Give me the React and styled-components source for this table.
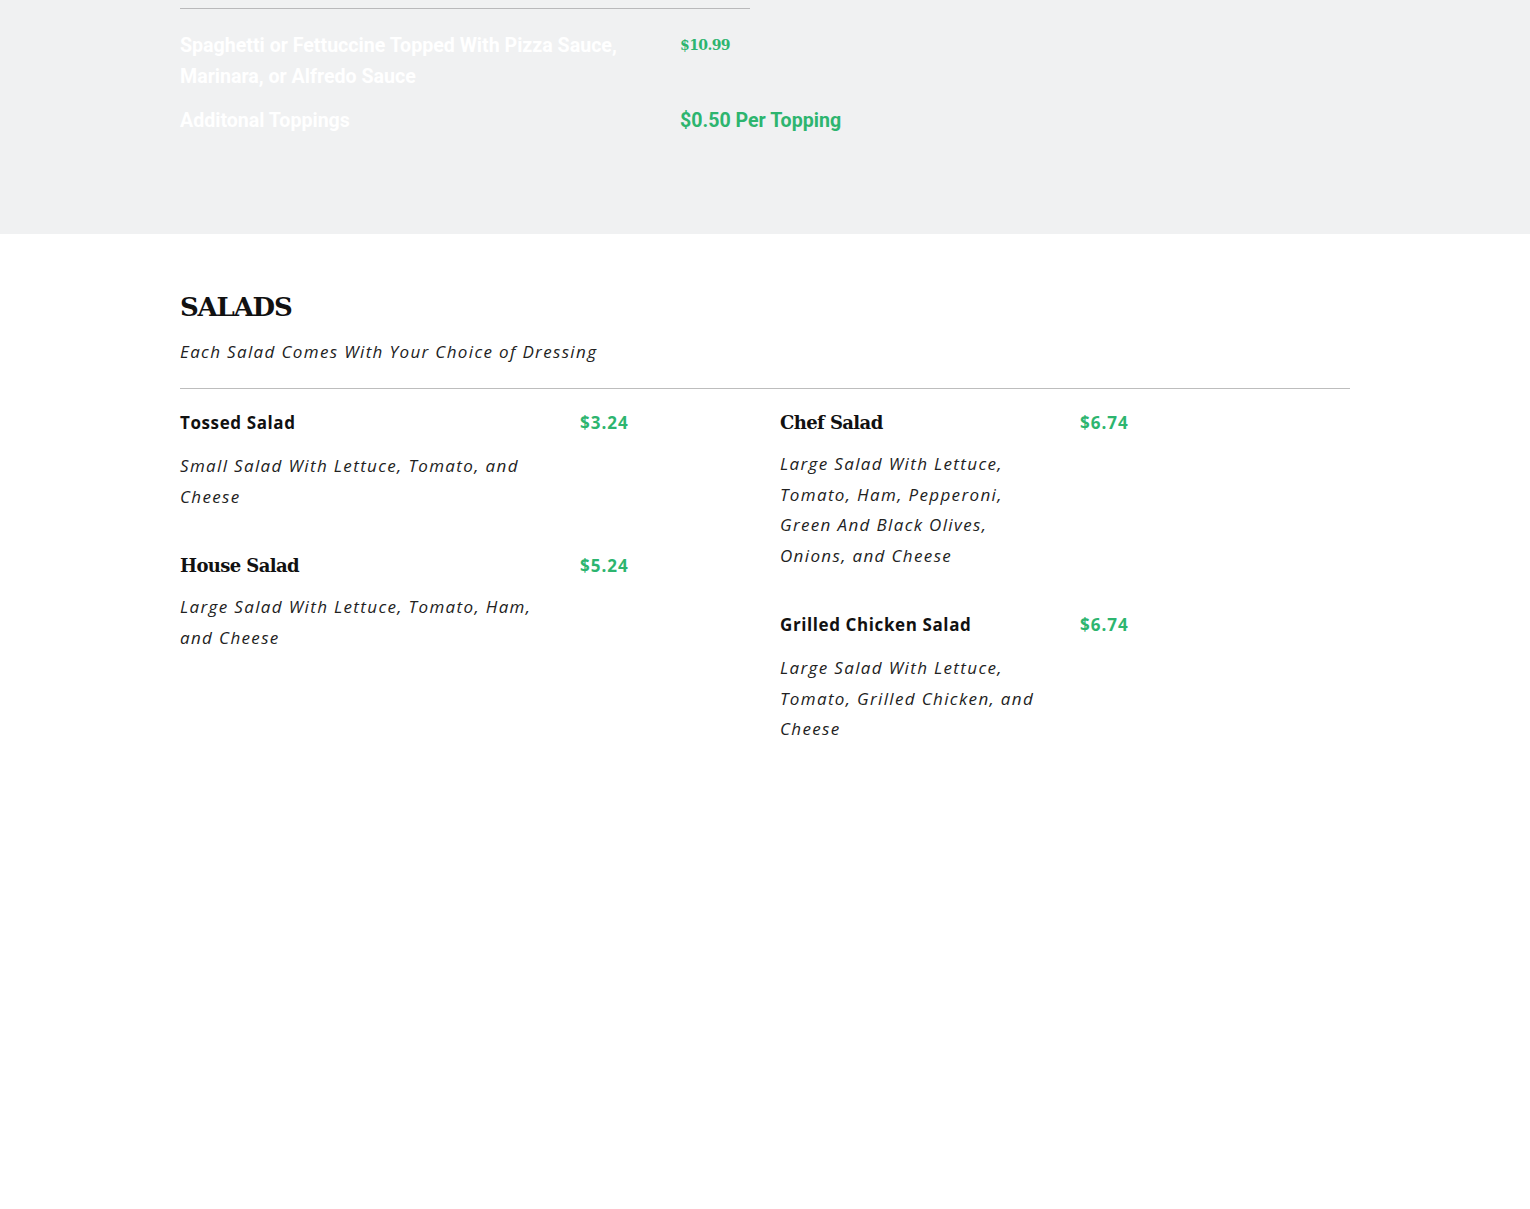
import React from 'react';
import styled, { createGlobalStyle } from 'styled-components';

const GlobalStyle = createGlobalStyle`
	html, body {
		margin: 0;
		padding: 0;
		background: #fff;
	}
	body {
		font-family: 'Open Sans', 'Noto Sans', sans-serif;
		color: #111;
	}
`;

const green = '#2db56f';
const slab = `'DejaVu Serif', serif`;
const sans = `'Open Sans', 'Noto Sans', sans-serif`;
const narrow = `'Liberation Sans Narrow', 'Roboto', sans-serif`;

const Container = styled.div`
	width: 1170px;
	margin: 0 auto;
`;

const TopBand = styled.section`
	background: #f0f1f2;
	height: 234px;
	box-sizing: border-box;
	padding-top: 8px;
`;

const ShortRule = styled.hr`
	width: 570px;
	margin: 0;
	border: none;
	border-top: 1px solid #b9b9bb;
`;

const PriceRows = styled.div`
	display: grid;
	grid-template-columns: 500px auto;
	row-gap: 13px;
	padding-top: 21px;
`;

const BandName = styled.div`
	width: 470px;
	color: #fff;
	font-family: ${narrow};
	font-weight: 700;
	font-size: 19.6px;
	line-height: 31px;
`;

const BandPrice = styled.div`
	color: ${green};
	font-family: ${props => props.slab ? slab : narrow};
	font-weight: 700;
	font-size: ${props => props.slab ? '14px' : '19.6px'};
	letter-spacing: ${props => props.slab ? '-0.6px' : '0'};
	line-height: 31px;
`;

const SaladSection = styled.section`
	padding-top: 56px;
	padding-bottom: 120px;
`;

const Title = styled.h2`
	margin: 0;
	font-family: ${slab};
	font-weight: 700;
	font-size: 26px;
	line-height: 34px;
	letter-spacing: -1.2px;
	color: #111;
`;

const Subtitle = styled.p`
	margin: 16px 0 0;
	font-family: ${sans};
	font-style: italic;
	font-size: 17px;
	line-height: 24px;
	letter-spacing: 1.35px;
	color: #222;
`;

const Rule = styled.hr`
	margin: 24px 0 0;
	border: none;
	border-top: 1px solid #bdbdbd;
`;

const Columns = styled.div`
	display: grid;
	grid-template-columns: 600px 570px;
	padding-top: 18px;
`;

const Column = styled.div`
	display: flex;
	flex-direction: column;
	gap: 38px;
`;

const Item = styled.div`
	display: flex;
	flex-direction: column;
`;

const ItemHead = styled.div`
	display: grid;
	grid-template-columns: ${props => props.narrow ? '300px' : '400px'} auto;
	align-items: center;
	height: 30px;
`;

const ItemName = styled.div`
	font-family: ${props => props.slab ? slab : sans};
	font-weight: 700;
	font-size: ${props => props.slab ? '18px' : '17px'};
	letter-spacing: ${props => props.slab ? '-0.6px' : '0.6px'};
	color: #111;
`;

const ItemPrice = styled.div`
	color: ${green};
	font-family: ${sans};
	font-weight: 700;
	font-size: 17px;
	letter-spacing: 1px;
`;

const ItemDesc = styled.p`
	margin: ${props => props.slab ? '12px' : '14px'} 0 0;
	max-width: ${props => props.narrow ? '262px' : '370px'};
	font-family: ${sans};
	font-style: italic;
	font-size: 17px;
	line-height: 30.5px;
	letter-spacing: 1.35px;
	color: #222;
`;

const left = [
	{ name: 'Tossed Salad', price: '$3.24', desc: 'Small Salad With Lettuce, Tomato, and Cheese' },
	{ name: 'House Salad', price: '$5.24', desc: 'Large Salad With Lettuce, Tomato, Ham, and Cheese', slab: true },
];

const right = [
	{ name: 'Chef Salad', price: '$6.74', desc: 'Large Salad With Lettuce, Tomato, Ham, Pepperoni, Green And Black Olives, Onions, and Cheese', slab: true },
	{ name: 'Grilled Chicken Salad', price: '$6.74', desc: 'Large Salad With Lettuce, Tomato, Grilled Chicken, and Cheese' },
];

const MenuItem = ({ item, narrow }) => (
	<Item>
		<ItemHead narrow={narrow}>
			<ItemName slab={item.slab}>{item.name}</ItemName>
			<ItemPrice>{item.price}</ItemPrice>
		</ItemHead>
		<ItemDesc slab={item.slab} narrow={narrow}>{item.desc}</ItemDesc>
	</Item>
);

export default function App() {
	return (
		<>
			<GlobalStyle />
			<TopBand>
				<Container>
					<ShortRule />
					<PriceRows>
						<BandName>Spaghetti or Fettuccine Topped With Pizza Sauce, Marinara, or Alfredo Sauce</BandName>
						<BandPrice slab>$10.99</BandPrice>
						<BandName>Additonal Toppings</BandName>
						<BandPrice>$0.50 Per Topping</BandPrice>
					</PriceRows>
				</Container>
			</TopBand>
			<SaladSection>
				<Container>
					<Title>SALADS</Title>
					<Subtitle>Each Salad Comes With Your Choice of Dressing</Subtitle>
					<Rule />
					<Columns>
						<Column>
							{left.map(item => <MenuItem key={item.name} item={item} />)}
						</Column>
						<Column>
							{right.map(item => <MenuItem key={item.name} item={item} narrow />)}
						</Column>
					</Columns>
				</Container>
			</SaladSection>
		</>
	);
}
